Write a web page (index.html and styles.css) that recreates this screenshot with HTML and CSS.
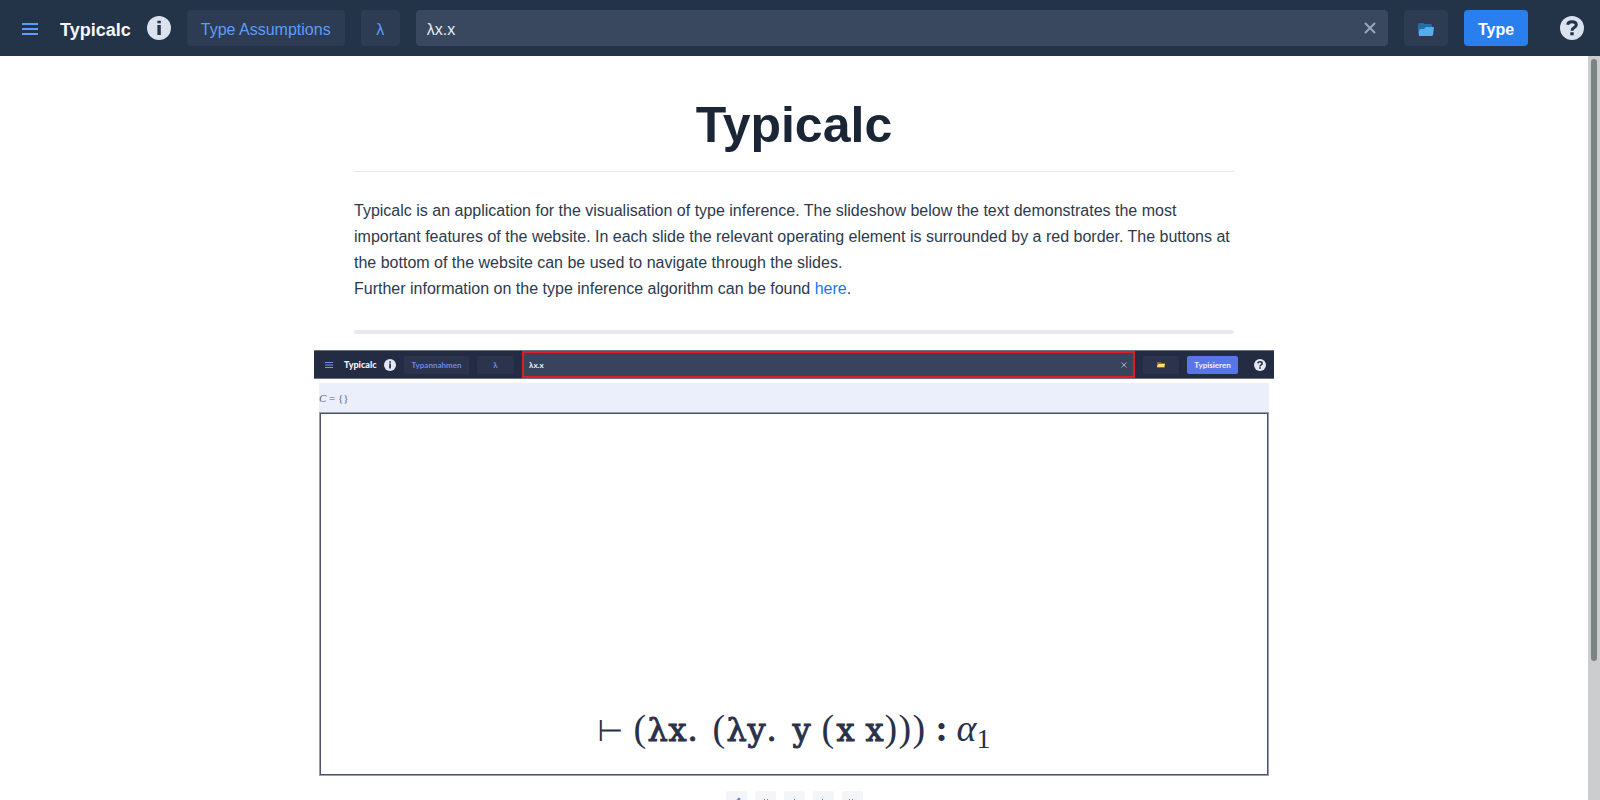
FILE: index.html
```html
<!DOCTYPE html>
<html lang="en">
<head>
<meta charset="utf-8">
<title>Typicalc</title>
<link rel="stylesheet" href="styles.css">
</head>
<body>
<header class="topbar">
  <button class="icon-btn menu" aria-label="Menu"><svg width="16" height="14" viewBox="0 0 16 14" fill="currentColor"><path d="M0 1h16v2H0zM0 6h16v2H0zM0 11h16v2H0z"/></svg></button>
  <strong class="brand">Typicalc</strong>
  <button class="icon-btn info" aria-label="About"><svg width="24" height="24" viewBox="0 0 24 24"><circle cx="12" cy="12" r="12" fill="#d9e2ee"/><path fill="#233348" d="M10.400 4.700h3.400v2.600h-3.400zM10.400 9h3.400v10h-3.400z"/></svg></button>
  <button class="btn assumptions">Type Assumptions</button>
  <button class="btn lambda">λ</button>
  <div class="field">
    <input type="text" value="λx.x" aria-label="Lambda term">
    <button class="icon-btn clear" aria-label="Clear"><svg width="12" height="12" viewBox="0 0 12 12" stroke="currentColor" stroke-width="2"><path d="M1 1l10 10M11 1L1 11"/></svg></button>
  </div>
  <button class="btn folder" aria-label="Examples"><svg width="16" height="14" viewBox="0 0 16 14"><path fill="#236da8" d="M0 12V2Q0 0 2 0h3l2 1h6q1 0 1 2v3L2 9z"/><path fill="#55adf1" d="M1 13V8q0-2 2-2h3l2-2h7q1 0 1 1l-1 7q0 1-2 1z"/></svg></button>
  <button class="btn primary">Type</button>
  <button class="icon-btn help" aria-label="Help"><svg width="24" height="24" viewBox="0 0 24 24"><circle cx="12" cy="12" r="12" fill="#d9e2ee"/><path fill="none" stroke="#233348" stroke-width="3" d="M7.600 8.800Q8 5.700 12 5.700q4.300 0 4.300 3.100 0 1.700-2.300 3-2 1.100-2 3"/><path fill="#233348" d="M10.300 16.300h3.400v3h-3.400z"/></svg></button>
</header>
<div class="viewport">
  <main class="content">
    <section class="intro">
      <h1>Typicalc</h1>
      <p>Typicalc is an application for the visualisation of type inference. The slideshow below the text demonstrates the most important features of the website. In each slide the relevant operating element is surrounded by a red border. The buttons at the bottom of the website can be used to navigate through the slides.<br>Further information on the type inference algorithm can be found <a href="#algorithm">here</a>.</p>
      <hr>
    </section>
    <section class="slide">
      <div class="slide-bar">
        <svg class="s-menu" width="8" height="8" viewBox="0 0 8 8" fill="currentColor"><path d="M0 1h8v1H0zM0 3.500h8v1H0zM0 6h8v1H0z"/></svg>
        <strong class="s-brand">Typicalc</strong>
        <svg width="12" height="12" viewBox="0 0 24 24"><circle cx="12" cy="12" r="12" fill="#e4e8f2"/><path fill="#242c43" d="M10.400 4.700h3.400v2.600h-3.400zM10.400 9h3.400v10h-3.400z"/></svg>
        <button class="s-btn s-assume">Typannahmen</button>
        <button class="s-btn s-lambda">λ</button>
        <div class="s-field"><input type="text" value="λx.x" aria-label="Term"><svg width="6" height="6" viewBox="0 0 6 6" stroke="#a4abbd"><path d="M.5.500l5 5M5.500.500l-5 5"/></svg></div>
        <button class="s-btn s-folder" aria-label="Beispiele"><svg width="8" height="6" viewBox="0 0 8 6"><path fill="#8a6a1c" d="M0 0h4l1 1h3v5H0z"/><path fill="#ffe071" d="M1 2h7L7 5H0z"/></svg></button>
        <button class="s-btn s-primary">Typisieren</button>
        <svg class="s-help" width="12" height="12" viewBox="0 0 24 24"><circle cx="12" cy="12" r="12" fill="#e4e8f2"/><path fill="none" stroke="#242c43" stroke-width="3" d="M7.600 8.800Q8 5.700 12 5.700q4.300 0 4.300 3.100 0 1.700-2.300 3-2 1.100-2 3"/><path fill="#242c43" d="M10.300 16.300h3.400v3h-3.400z"/></svg>
      </div>
      <div class="slide-body">
        <div class="constraints"><i>C</i> = {}</div>
        <div class="canvas">
          <div class="formula"><span class="turnstile">⊢</span><span class="par">(</span><span class="lam">λ</span><span class="tt">x</span><span class="tt dot">.</span><span class="par">(</span><span class="lam">λ</span><span class="tt">y</span><span class="tt dot">.</span><span class="tt arg">y</span><span class="par">(</span><span class="tt gap">x</span><span class="tt">x</span><span class="par">)</span><span class="par">)</span><span class="par">)</span><b class="colon">:</b><span><i>α</i><sub>1</sub></span></div>
        </div>
      </div>
      <nav class="steps">
        <button aria-label="Share"><svg width="10" height="10" viewBox="0 0 10 10" fill="currentColor" stroke="currentColor"><path fill="none" d="M8 2L2 5l6 3"/><circle cx="8" cy="2" r="1"/><circle cx="2" cy="5" r="1"/><circle cx="8" cy="8" r="1"/></svg></button>
        <button aria-label="First"><svg width="10" height="10" viewBox="0 0 10 10" fill="none" stroke="currentColor"><path d="M5 2L2 5l3 3M8 2L5 5l3 3"/></svg></button>
        <button aria-label="Previous"><svg width="10" height="10" viewBox="0 0 10 10" fill="none" stroke="currentColor"><path d="M6 2L3 5l3 3"/></svg></button>
        <button aria-label="Next"><svg width="10" height="10" viewBox="0 0 10 10" fill="none" stroke="currentColor"><path d="M4 2l3 3-3 3"/></svg></button>
        <button aria-label="Last"><svg width="10" height="10" viewBox="0 0 10 10" fill="none" stroke="currentColor"><path d="M2 2l3 3-3 3M5 2l3 3-3 3"/></svg></button>
      </nav>
    </section>
  </main>
  <div class="scrollbar"><div class="thumb"></div></div>
</div>
</body>
</html>
```
FILE: styles.css
```css
* { box-sizing: border-box; }
body {
  margin: 0; height: 100vh; overflow: hidden;
  display: flex; flex-direction: column;
  font: 16px/26px "Liberation Sans", Arial, sans-serif;
  color: #2c3a4d; background: #fff;
}
button, input { font: inherit; color: inherit; border: 0; padding: 0; margin: 0; background: none; }
svg { display: block; flex: none; }

.topbar {
  flex: none; height: 56px; padding: 0 16px 0 22px;
  display: flex; align-items: center; gap: 16px;
  background: #233348;
}
.icon-btn { flex: none; display: flex; }
.menu { color: #5c9dfb; margin-right: 6px; padding-top: 2px; }
.brand { font-size: 18px; color: #f5f8fd; padding-top: 4px; }
.help { margin-left: 16px; }
.btn {
  flex: none; height: 36px; padding-top: 3px; border-radius: 4px;
  display: flex; align-items: center; justify-content: center;
  background: #2d3c52; color: #5c9dfb;
}
.assumptions { width: 158px; }
.lambda { width: 39px; }
.folder { width: 44px; }
.primary { width: 64px; background: #2a7fef; color: #fff; font-weight: bold; }
.field {
  flex: 1; height: 36px; padding: 0 12px 0 11px; border-radius: 4px;
  display: flex; align-items: center;
  background: #39485f; color: #e6edf6;
}
.field input { flex: 1; min-width: 0; outline: 0; padding-top: 3px; }
.clear { color: #9aa8bd; }

.viewport { flex: 1; min-height: 0; display: flex; }
.content { flex: 1; overflow: hidden; display: flex; flex-direction: column; align-items: center; }
.intro { width: 100%; max-width: 880px; flex: none; }
h1 {
  margin: 41px 0 26px; padding-bottom: 17px;
  border-bottom: 1px solid #e6e8eb;
  font-size: 50px; line-height: 57px; text-align: center; color: #1a2535;
}
p { margin: 0; }
a { color: #1676f3; text-decoration: none; }
hr { height: 4px; border: 0; border-radius: 2px; margin: 28px 0 16px; background: #e6e9ef; }

.slide { width: 100%; max-width: 960px; flex: none; }
.slide-bar {
  height: 29px; padding: 0 8px 0 11px;
  display: flex; align-items: center; gap: 8px;
  background: #242c43; color: #f0f3fa;
  border-top: 1px solid #6b7182; border-bottom: 1px solid #6b7182;
  font: bold 8px/12px Lato, sans-serif;
}
.s-menu { color: #7593f5; }
.s-brand { margin-left: 3px; width: 32px; font-size: 9px; }
.s-brand, .s-btn { white-space: nowrap; }
.s-btn {
  flex: none; height: 18px; border-radius: 2px;
  display: flex; align-items: center; justify-content: center;
  background: #2b344c; color: #6f88e6;
}
.s-assume { width: 65px; }
.s-lambda { width: 37px; }
.s-folder { width: 36px; }
.s-primary { width: 51px; background: #5875ea; color: #f0f3fa; }
.s-help { margin-left: 8px; }
.s-field {
  flex: 1; min-width: 0; height: 27px; padding: 0 6px 0 5px;
  display: flex; align-items: center;
  border: 2px solid #dc1f25; background: #3a435c;
}
.s-field input { flex: 1; min-width: 0; }
.slide-body { padding: 4px 5px 0; }
.constraints {
  height: 29px; background: #ebeffb; color: #5c6275;
  font: 11px/30px "Liberation Serif", serif;
}
.canvas {
  height: 364px; padding-bottom: 20px;
  border: 1px solid #9a9fae; box-shadow: inset 0 0 0 1px #4b526b;
  display: flex; align-items: flex-end; justify-content: center;
}
.formula {
  display: flex; align-items: baseline;
  font: 38px/48px "Liberation Serif", serif; color: #2a3148;
}
.formula .tt, .formula .lam {
  width: 20px; font: 32px/48px "DejaVu Serif", serif; text-align: center;
  -webkit-text-stroke: 1px currentColor;
}
.formula .par { width: 14px; }
.formula .turnstile { font: 30px/48px "DejaVu Sans", sans-serif; width: 36px; }
.formula .dot { width: 25px; text-align: left; }
.formula .arg { margin-right: 10px; }
.formula .gap { margin-right: 9px; }
.formula .colon { width: 30px; text-align: center; }
.formula sub { font-size: 28px; line-height: 30px; vertical-align: -7px; }
.steps { display: flex; justify-content: center; gap: 8px; padding-top: 15px; }
.steps button {
  width: 21px; height: 21px; border-radius: 2px;
  display: flex; align-items: center; justify-content: center;
  background: #f3f5f8; color: #6580ee;
}
.scrollbar { flex: none; width: 12px; padding: 3px; background: #cccdce; }
.thumb { height: calc(82% - 3px); border-radius: 3px; background: #7d8282; }
```
